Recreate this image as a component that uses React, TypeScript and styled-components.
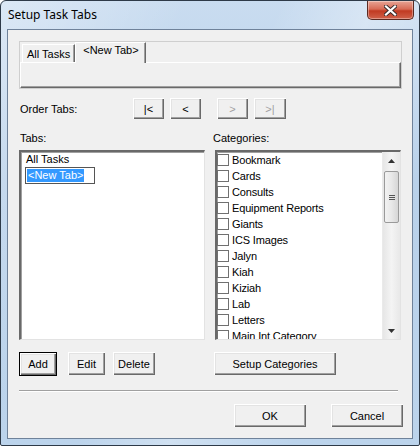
import React from "react";
import styled, { createGlobalStyle } from "styled-components";

const GlobalStyle = createGlobalStyle`
  html, body {
    margin: 0;
    padding: 0;
    background: #ffffff;
  }
  body {
    font-family: "Liberation Sans", Arial, sans-serif;
    font-size: 11px;
    color: #000;
  }
`;

const Window = styled.div`
  width: 420px;
  height: 446px;
  box-sizing: border-box;
  border: 1px solid #2e3a48;
  border-radius: 6px 6px 2px 2px;
  background: linear-gradient(
      115deg,
      rgba(255, 255, 255, 0.35) 0%,
      rgba(255, 255, 255, 0) 30%,
      rgba(255, 255, 255, 0) 45%,
      rgba(255, 255, 255, 0.3) 60%,
      rgba(255, 255, 255, 0) 80%
    ),
    linear-gradient(180deg, #c9dcf0 0%, #b9d1ea 40%, #bcd4ec 100%);
  display: flex;
  flex-direction: column;
  padding: 0 6px 6px 6px;
  overflow: hidden;
`;

const TitleBar = styled.div`
  height: 28px;
  display: flex;
  align-items: flex-start;
  justify-content: space-between;
`;

const Title = styled.span`
  font-family: "Noto Sans", "Open Sans", sans-serif;
  font-size: 12px;
  line-height: 16px;
  margin: 6px 0 0 1px;
  color: #000;
`;

const CloseButton = styled.div`
  width: 47px;
  height: 19px;
  box-sizing: border-box;
  margin-right: -1px;
  border: 1px solid #5a2a22;
  border-top: none;
  border-radius: 0 0 5px 5px;
  background: linear-gradient(180deg, #e8a495 0%, #d86b56 45%, #c13a22 55%, #d0614a 100%);
  box-shadow: inset 0 0 0 1px rgba(255, 255, 255, 0.35);
  display: flex;
  align-items: center;
  justify-content: center;
`;

const Client = styled.div`
  flex: 1;
  box-sizing: border-box;
  border: 1px solid #6f829a;
  background: #f0f0f0;
  display: flex;
  flex-direction: column;
`;

const TabBox = styled.div`
  margin: 11px 0 0 11px;
  width: 383px;
  height: 48px;
  box-sizing: border-box;
  border: 1px solid #cfcfcf;
  display: flex;
  flex-direction: column;
`;

const TabStrip = styled.div`
  height: 20px;
  display: flex;
  align-items: flex-end;
  padding-left: 2px;
`;

const Tab = styled.div<{ $active?: boolean }>`
  box-sizing: border-box;
  height: ${(p) => (p.$active ? 21 : 18)}px;
  margin-bottom: ${(p) => (p.$active ? -1 : 0)}px;
  padding: ${(p) => (p.$active ? "1px 6px 0 7px" : "3px 4px 0 4px")};
  border-top: 1px solid #ffffff;
  border-left: 1px solid #ffffff;
  border-right: 1px solid #696969;
  box-shadow: inset -1px 0 0 #a0a0a0;
  background: #f0f0f0;
  position: relative;
  z-index: ${(p) => (p.$active ? 1 : 0)};
  line-height: 13px;
  white-space: nowrap;
`;

const TabPanel = styled.div`
  flex: 1;
  border-top: 1px solid #ffffff;
  border-left: 1px solid #ffffff;
  border-right: 1px solid #696969;
  border-bottom: 1px solid #696969;
  box-shadow: inset -1px -1px 0 #a0a0a0;
`;

const OrderRow = styled.div`
  margin-top: 9px;
  height: 21px;
  display: flex;
  align-items: center;
  padding-left: 12px;
`;

const OrderLabel = styled.span`
  width: 113px;
`;

const ArrowGroup = styled.div`
  display: flex;
  gap: 6px;
  margin-right: 16px;
`;

const Button = styled.button<{ $width: number; $default?: boolean }>`
  width: ${(p) => p.$width}px;
  height: ${(p) => (p.$default ? 24 : 23)}px;
  box-sizing: border-box;
  padding: 0;
  margin: 0;
  font-family: "Liberation Sans", Arial, sans-serif;
  font-size: 11px;
  color: ${(p) => (p.disabled ? "#a0a0a0" : "#000")};
  background: #f0f0f0;
  border: ${(p) => (p.$default ? "1px solid #000" : "none")};
  box-shadow: inset 1px 1px 0 #ffffff, inset -1px -1px 0 #696969, inset -2px -2px 0 #a0a0a0,
    inset 2px 2px 0 #e3e3e3;
  display: flex;
  align-items: center;
  justify-content: center;
`;

const ArrowButton = styled(Button)`
  height: 21px;
`;

const Columns = styled.div`
  margin-top: 13px;
  display: flex;
  padding-left: 11px;
  gap: 10px;
`;

const Column = styled.div<{ $labelShift: number }>`
  width: 186px;
  display: flex;
  flex-direction: column;

  & > span {
    height: 13px;
    line-height: 13px;
    margin-left: ${(p) => p.$labelShift}px;
    margin-bottom: 5px;
  }
`;

const ListBox = styled.div`
  height: 190px;
  box-sizing: border-box;
  background: #ffffff;
  border-top: 2px solid #696969;
  border-left: 2px solid #696969;
  border-right: 1px solid #e3e3e3;
  border-bottom: 1px solid #e3e3e3;
  box-shadow: inset 1px 1px 0 #a0a0a0;
  display: flex;
  overflow: hidden;
`;

const TabItems = styled.div`
  padding: 1px 0 0 4px;
  display: flex;
  flex-direction: column;
`;

const TabItem = styled.div`
  height: 13px;
  line-height: 13px;
  padding-left: 1px;
`;

const RenameBox = styled.div`
  margin-top: 1px;
  width: 70px;
  height: 17px;
  box-sizing: border-box;
  border: 1px solid #555;
  background: #fff;
  padding: 1px;
  display: flex;
`;

const Highlight = styled.span`
  background: #3399ff;
  color: #fff;
  line-height: 13px;
  height: 13px;
  padding: 0 1px;
`;

const CheckItems = styled.div`
  flex: 1;
  padding: 0 0 0 0;
  display: flex;
  flex-direction: column;
`;

const CheckRow = styled.div`
  height: 16px;
  display: flex;
  align-items: center;
  flex-shrink: 0;
  white-space: nowrap;
  letter-spacing: -0.15px;
`;

const CheckBox = styled.span`
  width: 12px;
  height: 12px;
  box-sizing: border-box;
  border: 1px solid #707070;
  background: #fff;
  margin-right: 3px;
  flex-shrink: 0;
`;

const ScrollBar = styled.div`
  width: 17px;
  background: linear-gradient(90deg, #e6e6e6 0%, #f4f4f4 50%, #e8e8e8 100%);
  border-left: 1px solid #eaeaea;
  display: flex;
  flex-direction: column;
  align-items: center;
`;

const ScrollArrow = styled.div`
  height: 17px;
  width: 100%;
  display: flex;
  align-items: center;
  justify-content: center;
  flex-shrink: 0;
`;

const ScrollThumb = styled.div`
  width: 15px;
  height: 52px;
  box-sizing: border-box;
  margin-top: 2px;
  border: 1px solid #9a9a9a;
  border-radius: 2px;
  background: linear-gradient(90deg, #f2f2f2 0%, #e8e8e8 50%, #d6d6d6 100%);
  display: flex;
  flex-direction: column;
  align-items: center;
  justify-content: center;
  gap: 1px;

  & > i {
    width: 6px;
    height: 1px;
    background: #555;
  }
`;

const ScrollTrack = styled.div`
  flex: 1;
`;

const ActionRow = styled.div`
  margin-top: 12px;
  display: flex;
  align-items: flex-start;
  padding-left: 11px;
`;

const Separator = styled.div`
  margin: 14px 0 0 11px;
  width: 379px;
  height: 1px;
  background: #a0a0a0;
  border-bottom: 1px solid #ffffff;
`;

const FooterRow = styled.div`
  margin-top: 12px;
  display: flex;
  justify-content: flex-end;
  gap: 25px;
  padding-right: 9px;
`;

const categories = [
  "Bookmark",
  "Cards",
  "Consults",
  "Equipment Reports",
  "Giants",
  "ICS Images",
  "Jalyn",
  "Kiah",
  "Kiziah",
  "Lab",
  "Letters",
  "Main Int Category",
];

const Tri = ({ up }: { up?: boolean }) => (
  <svg width="7" height="4" viewBox="0 0 7 4">
    <path d={up ? "M3.5 0 L7 4 L0 4 Z" : "M0 0 L7 0 L3.5 4 Z"} fill="#333" />
  </svg>
);

export default function App() {
  return (
    <>
      <GlobalStyle />
      <Window>
        <TitleBar>
          <Title>Setup Task Tabs</Title>
          <CloseButton>
            <svg width="13" height="11" viewBox="0 0 13 11">
              <path
                d="M2 1.5 L11 9.5 M11 1.5 L2 9.5"
                stroke="#3a2b2b"
                strokeWidth="4"
                strokeLinecap="square"
              />
              <path
                d="M2 1.5 L11 9.5 M11 1.5 L2 9.5"
                stroke="#ffffff"
                strokeWidth="2.2"
                strokeLinecap="square"
              />
            </svg>
          </CloseButton>
        </TitleBar>
        <Client>
          <TabBox>
            <TabStrip>
              <Tab>All Tasks</Tab>
              <Tab $active>&lt;New Tab&gt;</Tab>
            </TabStrip>
            <TabPanel />
          </TabBox>

          <OrderRow>
            <OrderLabel>Order Tabs:</OrderLabel>
            <ArrowGroup>
              <ArrowButton $width={31}>|&lt;</ArrowButton>
              <ArrowButton $width={31}>&lt;</ArrowButton>
            </ArrowGroup>
            <ArrowGroup>
              <ArrowButton $width={31} disabled>
                &gt;
              </ArrowButton>
              <ArrowButton $width={32} disabled>
                &gt;|
              </ArrowButton>
            </ArrowGroup>
          </OrderRow>

          <Columns>
            <Column $labelShift={1}>
              <span>Tabs:</span>
              <ListBox>
                <TabItems>
                  <TabItem>All Tasks</TabItem>
                  <RenameBox>
                    <Highlight>&lt;New Tab&gt;</Highlight>
                  </RenameBox>
                </TabItems>
              </ListBox>
            </Column>
            <Column $labelShift={-2}>
              <span>Categories:</span>
              <ListBox>
                <CheckItems>
                  {categories.map((c) => (
                    <CheckRow key={c}>
                      <CheckBox />
                      {c}
                    </CheckRow>
                  ))}
                </CheckItems>
                <ScrollBar>
                  <ScrollArrow>
                    <Tri up />
                  </ScrollArrow>
                  <ScrollThumb>
                    <i />
                    <i />
                    <i />
                  </ScrollThumb>
                  <ScrollTrack />
                  <ScrollArrow>
                    <Tri />
                  </ScrollArrow>
                </ScrollBar>
              </ListBox>
            </Column>
          </Columns>

          <ActionRow>
            <Button $width={38} $default>
              Add
            </Button>
            <Button $width={37} style={{ marginLeft: 11 }}>
              Edit
            </Button>
            <Button $width={42} style={{ marginLeft: 8 }}>
              Delete
            </Button>
            <Button $width={122} style={{ marginLeft: 59 }}>
              Setup Categories
            </Button>
          </ActionRow>

          <Separator />

          <FooterRow>
            <Button $width={72}>OK</Button>
            <Button $width={72}>Cancel</Button>
          </FooterRow>
        </Client>
      </Window>
    </>
  );
}
